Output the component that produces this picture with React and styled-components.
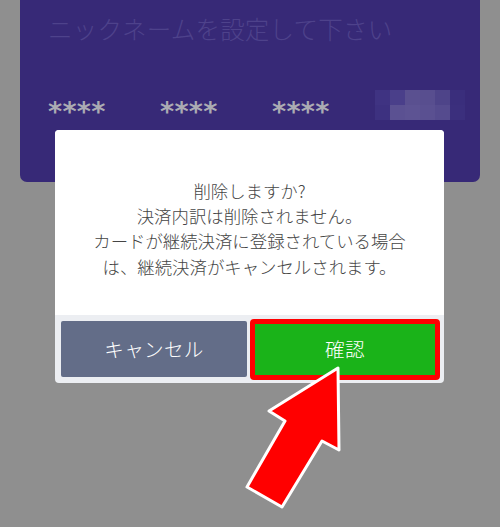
import React from "react";
import styled, { createGlobalStyle } from "styled-components";

const Global = createGlobalStyle`
  html, body { margin: 0; padding: 0; }
  body {
    background: #8f8f8f;
    font-family: "Noto Sans CJK JP", "Noto Sans", sans-serif;
  }
`;

const Screen = styled.div`
  position: relative;
  width: 500px;
  height: 527px;
  overflow: hidden;
  background: #8f8f8f;
`;

const Card = styled.div`
  margin: -12px 20px 0;
  height: 194px;
  box-sizing: border-box;
  background: #372977;
  border-radius: 7px;
  padding: 24px 0 0 28px;
  display: flex;
  flex-direction: column;
`;

const Nickname = styled.div`
  font-size: 24.5px;
  line-height: 34px;
  font-weight: 300;
  color: #4e428b;
  letter-spacing: 0.2px;
`;

const NumberRow = styled.div`
  margin-top: 44px;
  display: flex;
  align-items: flex-start;
  height: 30px;
`;

const Masked = styled.span`
  flex-shrink: 0;
  width: 112px;
  height: 30px;
  font-family: "DejaVu Sans", sans-serif;
  font-size: 27px;
  font-weight: bold;
  letter-spacing: 0.3px;
  color: #ababb3;
  line-height: 30px;
  padding-top: 7px;
  box-sizing: border-box;
  overflow: visible;
`;

const Mosaic = styled.div`
  flex-shrink: 0;
  display: grid;
  grid-template-columns: repeat(6, 15px);
  grid-template-rows: repeat(2, 15px);
  margin-left: -9px;
`;

const Tile = styled.div`
  background: ${(p) => p.$c};
`;

const Dialog = styled.div`
  position: absolute;
  left: 55px;
  top: 130px;
  width: 389px;
  border-radius: 4px;
  overflow: hidden;
  background: #eceef2;
  display: flex;
  flex-direction: column;
`;

const Message = styled.div`
  background: #ffffff;
  padding: 47.6px 0 0;
  text-align: center;
  color: #454545;
  font-size: 17.4px;
  font-weight: 300;
  line-height: 25.4px;
  height: 185px;
  box-sizing: border-box;
`;

const Footer = styled.div`
  display: flex;
  align-items: stretch;
  gap: 3px;
  padding: 6px 4px 6px 6px;
  height: 68px;
  box-sizing: border-box;
`;

const Button = styled.button`
  border: none;
  border-radius: 2px;
  color: #ffffff;
  font-family: "Noto Sans CJK JP", "Noto Sans", sans-serif;
  font-size: 19.6px;
  font-weight: 300;
  letter-spacing: 0.3px;
  display: flex;
  align-items: center;
  justify-content: center;
  padding: 0 0 2px;
`;

const CancelButton = styled(Button)`
  width: 186px;
  background: #636d88;
`;

const ConfirmButton = styled(Button)`
  flex: 1;
  margin: -2px 0 -3px;
  background: #1ab319;
  border: 5px solid #ff0000;
  border-radius: 4px;
`;

const ArrowLayer = styled.svg`
  position: absolute;
  left: 0;
  top: 0;
  pointer-events: none;
`;

const tiles = [
  "#3f3382", "#4a3f8a", "#5a5090", "#584e8f", "#4e4489", "#3a2e7c",
  "#3d3180", "#5b5192", "#5d5393", "#5a5091", "#554b8e", "#3b2f7d",
];

export default function App() {
  return (
    <Screen>
      <Global />
      <Card>
        <Nickname>ニックネームを設定して下さい</Nickname>
        <NumberRow>
          <Masked>****</Masked>
          <Masked>****</Masked>
          <Masked>****</Masked>
          <Mosaic>
            {tiles.map((c, i) => (
              <Tile key={i} $c={c} />
            ))}
          </Mosaic>
        </NumberRow>
      </Card>
      <Dialog>
        <Message>
          削除しますか?
          <br />
          決済内訳は削除されません。
          <br />
          カードが継続決済に登録されている場合
          <br />
          は、継続決済がキャンセルされます。
        </Message>
        <Footer>
          <CancelButton>キャンセル</CancelButton>
          <ConfirmButton>確認</ConfirmButton>
        </Footer>
      </Dialog>
      <ArrowLayer width="500" height="527" viewBox="0 0 500 527">
        <polygon
          points="338,368 339,450 322,441 282,507 247,487 285,421 269,411"
          fill="#ff0000"
          stroke="#ffffff"
          strokeWidth="3"
          strokeLinejoin="round"
        />
      </ArrowLayer>
    </Screen>
  );
}
